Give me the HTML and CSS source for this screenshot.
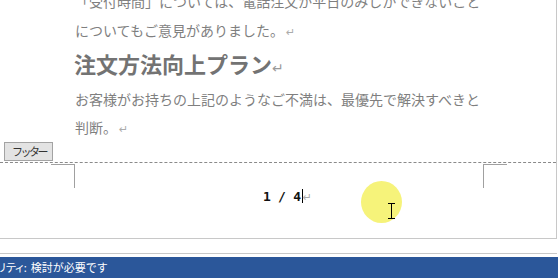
FILE: index.html
```html
<!DOCTYPE html>
<html lang="ja">
<head>
<meta charset="utf-8">
<link rel="stylesheet" href="styles.css">
</head>
<body>
<div class="doc">
  <div class="body">
    <p class="para p1">「受付時間」については、電話注文が平日のみしかできないこと<br>についてもご意見がありました。<span class="ret">↵</span></p>
    <h2 class="heading">注文方法向上プラン<span class="ret ret-h">↵</span></h2>
    <p class="para p2">お客様がお持ちの上記のようなご不満は、最優先で解決すべきと<br>判断。<span class="ret">↵</span></p>
  </div>
  <div class="tagrow"><span class="tag">フッター</span></div>
  <div class="footer">
    <div class="mark mark-left"></div>
    <div class="pagenum"><span class="num">1 / 4</span><span class="caret"></span><span class="ret ret-p">↵</span></div>
    <div class="mark mark-right"></div>
    <div class="highlight"></div>
    <svg class="ibeam" width="9" height="16" viewBox="0 0 9 16"><path d="M1 0.5h7M4.5 0.5v15M1 15.5h7" stroke="#000" stroke-width="1" fill="none"/></svg>
  </div>
</div>
<div class="sep"></div>
<div class="status"><span class="status-text"><span class="cut">リティ:</span> 検討が必要です</span></div>
</body>
</html>
```
FILE: styles.css
```css
html, body {
  margin: 0;
  padding: 0;
  background: #fff;
}
body {
  width: 558px;
  height: 278px;
  overflow: hidden;
  font-family: "Noto Sans CJK JP", "Noto Sans", sans-serif;
}
.doc {
  width: 556px;
  height: 238px;
  border-right: 1px solid #c8c8c8;
  border-bottom: 1px solid #c8c8c8;
  overflow: hidden;
  position: relative;
}
.body {
  padding-left: 75px;
  margin-top: -13px;
  white-space: nowrap;
}
.para {
  margin: 0;
  font-size: 14px;
  color: #7f7f7f;
}
.p1 { line-height: 29px; }
.p2 { line-height: 28px; margin-top: 7px; }
.heading {
  margin: 3px 0 0 -1px;
  font-size: 22px;
  line-height: 30px;
  font-weight: bold;
  color: #737373;
}
.ret {
  font-family: "DejaVu Sans", sans-serif;
  font-size: 11px;
  line-height: 0;
  color: #ababab;
  margin-left: 2px;
  font-weight: normal;
}
.ret-h { font-size: 14px; color: #9a9a9a; margin-left: 0; }
.tagrow {
  margin-top: 1px;
  padding-left: 4px;
  height: 19px;
  display: flex;
}
.tag {
  box-sizing: border-box;
  height: 19px;
  width: 49px;
  border: 1px solid #a3a3a3;
  background: #e3e3e3;
  color: #333;
  font-size: 11px;
  line-height: 16px;
  letter-spacing: -2.5px;
  padding-left: 7px;
}
.footer {
  margin-top: 1px;
  border-top: 1px dashed #8a8a8a;
  padding: 1px 49px 0 51px;
  display: flex;
  align-items: flex-start;
  position: relative;
  height: 60px;
}
.mark {
  width: 23px;
  height: 23px;
  border-top: 1px solid #a0a0a0;
}
.mark-left { border-right: 1px solid #a0a0a0; }
.mark-right { border-left: 1px solid #a0a0a0; }
.pagenum {
  flex: 1;
  text-align: center;
  padding-top: 22px;
  padding-left: 17px;
  line-height: 16px;
  white-space: nowrap;
}
.num {
  font-family: "DejaVu Sans Mono", monospace;
  font-weight: bold;
  font-size: 13px;
  letter-spacing: -0.3px;
  color: #111;
}
.caret {
  display: inline-block;
  width: 1px;
  height: 14px;
  background: #000;
  vertical-align: -2px;
  margin-left: 1px;
}
.ret-p { margin-left: 0; }
.highlight {
  position: absolute;
  left: 361px;
  top: 18px;
  width: 41px;
  height: 42px;
  border-radius: 50%;
  background: #f6f37a;
}
.ibeam {
  position: absolute;
  left: 387px;
  top: 40px;
}
.sep {
  margin-top: 14px;
  width: 557px;
  border-top: 1px solid #c8c8c8;
}
.status {
  margin-top: 3px;
  height: 21px;
  background: #2b579a;
  overflow: hidden;
  white-space: nowrap;
}
.status-text {
  display: block;
  margin-left: -4px;
  color: #fff;
  font-size: 11px;
  line-height: 20px;
}
.cut { letter-spacing: -1.5px; margin-right: 3px; }
```
